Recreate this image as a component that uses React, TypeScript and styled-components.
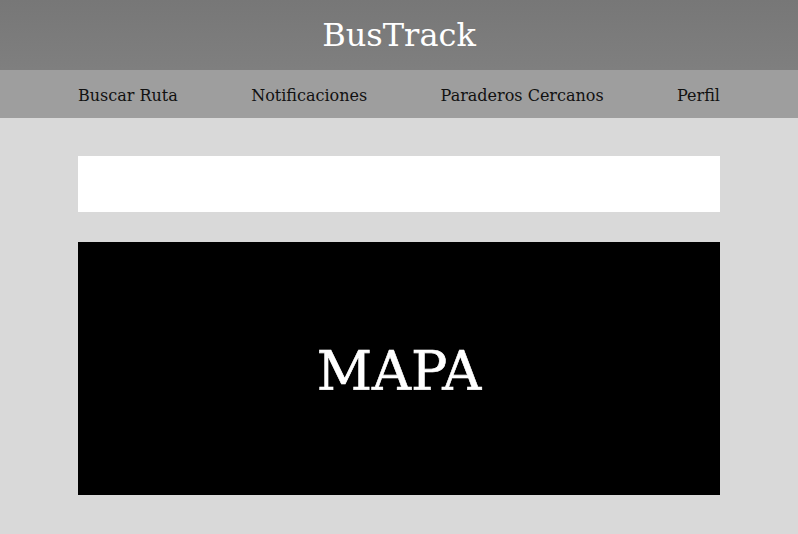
import * as React from 'react';
import styled, { createGlobalStyle } from 'styled-components';

const GlobalStyle = createGlobalStyle`
  html, body {
    margin: 0;
    padding: 0;
    background: #d9d9d9;
    font-family: "DejaVu Serif", "Liberation Serif", serif;
  }
`;

const Page = styled.div`
  min-height: 534px;
  background: #d9d9d9;
`;

const Header = styled.header`
  height: 70px;
  display: flex;
  align-items: center;
  justify-content: center;
  background: linear-gradient(#777777, #7f7f7f);
`;

const Title = styled.h1`
  margin: 0;
  color: #ffffff;
  font-size: 32px;
  font-weight: normal;
`;

const Nav = styled.nav`
  height: 48px;
  padding: 2px 78px 0;
  box-sizing: border-box;
  display: flex;
  align-items: center;
  justify-content: space-between;
  background: #9e9e9e;
`;

const NavLink = styled.a`
  color: #111111;
  font-size: 16px;
  text-decoration: none;
  cursor: pointer;
`;

const Main = styled.main`
  padding: 38px 78px 39px;
  display: flex;
  flex-direction: column;
  gap: 30px;
`;

const SearchInput = styled.input`
  height: 56px;
  border: none;
  outline: none;
  background: #ffffff;
  padding: 0 16px;
  font-family: inherit;
  font-size: 16px;
`;

const Map = styled.div`
  height: 253px;
  box-sizing: border-box;
  padding-top: 6px;
  display: flex;
  align-items: center;
  justify-content: center;
  background: #000000;
  color: #ffffff;
  font-size: 54px;
  -webkit-text-stroke: 0.6px #ffffff;
`;

const links = ['Buscar Ruta', 'Notificaciones', 'Paraderos Cercanos', 'Perfil'];

export default function App() {
  return (
    <Page>
      <GlobalStyle />
      <Header>
        <Title>BusTrack</Title>
      </Header>
      <Nav>
        {links.map((l) => (
          <NavLink key={l}>{l}</NavLink>
        ))}
      </Nav>
      <Main>
        <SearchInput type="text" />
        <Map>MAPA</Map>
      </Main>
    </Page>
  );
}
